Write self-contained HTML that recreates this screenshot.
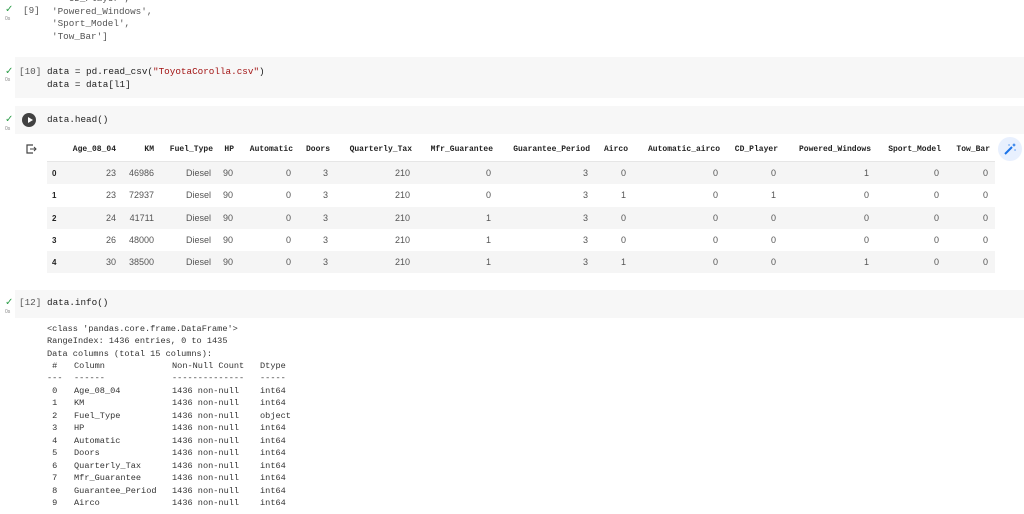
<!DOCTYPE html>
<html><head><meta charset="utf-8"><style>
body{margin:0;width:1024px;height:514px;background:#fff;position:relative;overflow:hidden;font-family:"Liberation Mono",monospace;}
.a{position:absolute;white-space:pre;}
.m{font-family:"Liberation Mono",monospace;font-size:9.3px;color:#212121;}
.cell{position:absolute;left:15px;right:0;background:#f7f7f7;}
.ck{position:absolute;color:#2e9e4a;font-size:10px;font-family:"DejaVu Sans",sans-serif;}
.ds{position:absolute;color:#888;font-size:5px;font-family:"Liberation Sans",sans-serif;}
.hd{font-family:"Liberation Mono",monospace;font-weight:bold;font-size:8px;color:#222;}
.v{font-family:"Liberation Sans",sans-serif;font-size:9px;color:#555;}
.stripe{position:absolute;left:47px;width:948px;height:22px;background:#f5f5f5;}
.o{font-family:"Liberation Mono",monospace;font-size:8.6px;color:#333;line-height:12.45px;}
</style></head><body>
<div class="ck" style="left:5px;top:4px">✓</div><div class="ds" style="left:5px;top:16px">0s</div>
<div class="a m" style="left:23px;top:5px;color:#555">[9]</div>
<div class="a m" style="left:52px;top:-7px;line-height:12.5px;color:#555">  'CD_Player',
'Powered_Windows',
'Sport_Model',
'Tow_Bar']</div>

<div class="cell" style="top:57px;height:41px"></div>
<div class="ck" style="left:5px;top:66px">✓</div><div class="ds" style="left:5px;top:77px">0s</div>
<div class="a m" style="left:19px;top:66px;color:#555">[10]</div>
<div class="a m" style="left:47px;top:65px;line-height:13px">data = pd.read_csv(<span style="color:#a31515">"ToyotaCorolla.csv"</span>)
data = data[l1]</div>

<div class="cell" style="top:106px;height:28px"></div>
<div class="ck" style="left:5px;top:114px">✓</div><div class="ds" style="left:5px;top:126px">0s</div>
<div style="position:absolute;left:22px;top:113px;width:14px;height:14px;border-radius:50%;background:#424242"></div>
<div style="position:absolute;left:28px;top:117px;width:0;height:0;border-left:5px solid #fff;border-top:3px solid transparent;border-bottom:3px solid transparent"></div>
<div class="a m" style="left:47px;top:114px">data.head()</div>

<svg style="position:absolute;left:25px;top:143px" width="12" height="12" viewBox="0 0 12 12"><path d="M8 2H2V10H8" fill="none" stroke="#444" stroke-width="1.2"/><path d="M5 6H11M9 4L11 6L9 8" fill="none" stroke="#444" stroke-width="1"/></svg>

<div class="stripe" style="top:162px"></div>
<div class="stripe" style="top:207px"></div>
<div class="stripe" style="top:251px"></div>
<div style="position:absolute;left:47px;width:948px;top:161px;height:1px;background:#e6e6e6"></div>

<div id="t"></div>
<div style="position:absolute;left:998px;top:137px;width:24px;height:24px;border-radius:50%;background:#e8f0fe"></div>
<svg style="position:absolute;left:1003px;top:142px" width="14" height="14" viewBox="0 0 14 14"><path d="M2 12L9 5" stroke="#1a73e8" stroke-width="2"/><path d="M11 1l.6 1.4L13 3l-1.4.6L11 5l-.6-1.4L9 3l1.4-.6zM6 2l.4.8L7 3l-.6.3L6 4l-.3-.7L5 3l.7-.2zM12 7l.4.8L13 8l-.6.3L12 9l-.3-.7L11 8l.7-.2z" fill="#1a73e8"/></svg>

<div class="cell" style="top:290px;height:28px"></div>
<div class="ck" style="left:5px;top:297px">✓</div><div class="ds" style="left:5px;top:309px">0s</div>
<div class="a m" style="left:19px;top:297px;color:#555">[12]</div>
<div class="a m" style="left:47px;top:297px">data.info()</div>
<div class="a o" style="left:47px;top:323px">&lt;class 'pandas.core.frame.DataFrame'&gt;
RangeIndex: 1436 entries, 0 to 1435
Data columns (total 15 columns):</div>
<div class="a o" style="left:47px;top:360px"> #
---
 0
 1
 2
 3
 4
 5
 6
 7
 8
 9</div>
<div class="a o" style="left:74px;top:360px">Column
------

KM
Fuel_Type
HP
Automatic
Doors
Quarterly_Tax
Mfr_Guarantee
Guarantee_Period
Airco</div>
<div class="a o" style="left:74px;top:385px">Age_08_04</div>
<div class="a o" style="left:172px;top:360px">Non-Null Count
--------------
1436 non-null
1436 non-null
1436 non-null
1436 non-null
1436 non-null
1436 non-null
1436 non-null
1436 non-null
1436 non-null
1436 non-null</div>
<div class="a o" style="left:260px;top:360px">Dtype
-----
int64
int64
object
int64
int64
int64
int64
int64
int64
int64</div>
<script>
var R=[116,154,213,234,293,330,412,493,590,628,720,778,871,941,990];
var H=["Age_08_04","KM","Fuel_Type","HP","Automatic","Doors","Quarterly_Tax","Mfr_Guarantee","Guarantee_Period","Airco","Automatic_airco","CD_Player","Powered_Windows","Sport_Model","Tow_Bar"];
var D=[["23","46986","Diesel","90","0","3","210","0","3","0","0","0","1","0","0"],
["23","72937","Diesel","90","0","3","210","0","3","1","0","1","0","0","0"],
["24","41711","Diesel","90","0","3","210","1","3","0","0","0","0","0","0"],
["26","48000","Diesel","90","0","3","210","1","3","0","0","0","0","0","0"],
["30","38500","Diesel","90","0","3","210","1","3","1","0","0","1","0","0"]];
var Y=[168,190,213,235,257];var s="";
for(var i=0;i<15;i++){s+='<div class="a hd" style="right:'+(1024-R[i])+'px;top:145px">'+H[i]+'</div>';}
for(var r=0;r<5;r++){s+='<div class="a hd" style="left:52px;top:'+(Y[r]+1)+'px;font-family:Liberation Sans,sans-serif">'+r+'</div>';
for(var i=0;i<15;i++){var x=R[i]-2;if(i==1)x=R[1];if(i==3)x=233;if(i==0)x=116;s+='<div class="a v" style="right:'+(1024-x)+'px;top:'+Y[r]+'px">'+D[r][i]+'</div>';}}
document.getElementById("t").innerHTML=s;
</script>
</body></html>
